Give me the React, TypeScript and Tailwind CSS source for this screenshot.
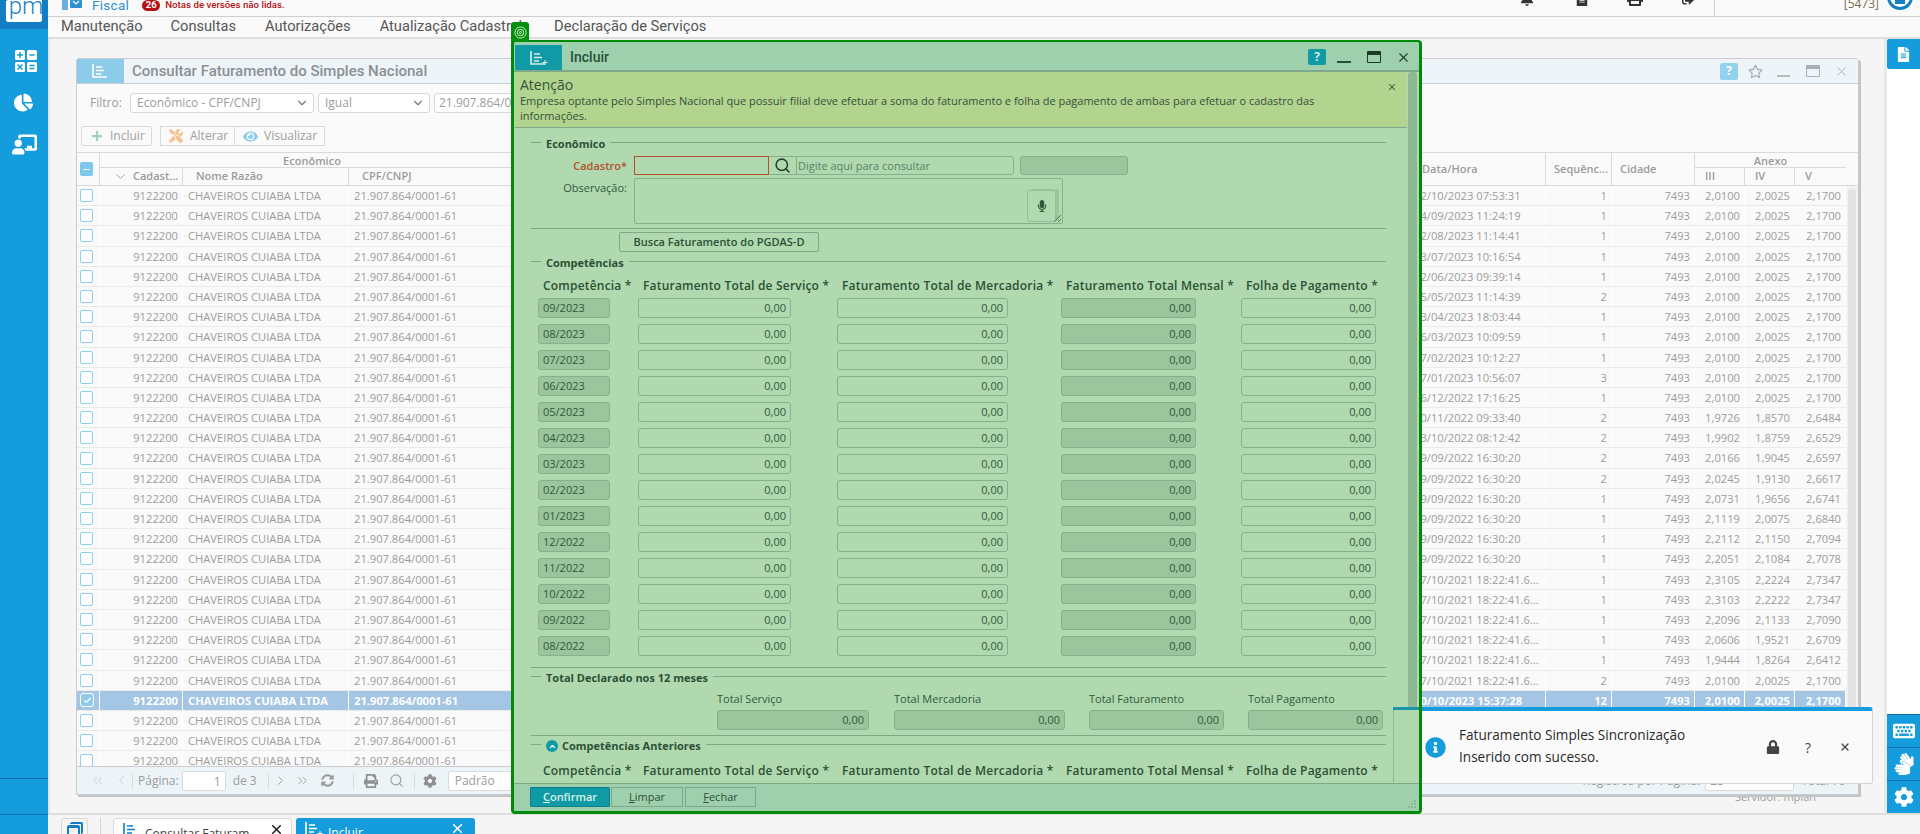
import React from "react";
import { FaBell, FaChalkboardTeacher, FaChartPie, FaCog, FaFileAlt, FaInfoCircle, FaKeyboard, FaLock, FaMicrophone, FaPrint, FaSignLanguage, FaSyncAlt, FaPlus, FaTools, FaEye, FaRegStar, FaSignOutAlt } from "react-icons/fa";
import { ChevronDown, ChevronLeft, ChevronRight, ChevronsLeft, ChevronsRight, ChevronUp, Search, X, Check, Minus } from "lucide-react";

const D21 = "7/10/2021 18:22:41.6…";
const rowsData: [string, string, string, string, string][] = [
  ["12/10/2023 07:53:31", "1", "2,0100", "2,0025", "2,1700"],
  ["14/09/2023 11:24:19", "1", "2,0100", "2,0025", "2,1700"],
  ["12/08/2023 11:14:41", "1", "2,0100", "2,0025", "2,1700"],
  ["13/07/2023 10:16:54", "1", "2,0100", "2,0025", "2,1700"],
  ["12/06/2023 09:39:14", "1", "2,0100", "2,0025", "2,1700"],
  ["15/05/2023 11:14:39", "2", "2,0100", "2,0025", "2,1700"],
  ["13/04/2023 18:03:44", "1", "2,0100", "2,0025", "2,1700"],
  ["16/03/2023 10:09:59", "1", "2,0100", "2,0025", "2,1700"],
  ["17/02/2023 10:12:27", "1", "2,0100", "2,0025", "2,1700"],
  ["17/01/2023 10:56:07", "3", "2,0100", "2,0025", "2,1700"],
  ["16/12/2022 17:16:25", "1", "2,0100", "2,0025", "2,1700"],
  ["10/11/2022 09:33:40", "2", "1,9726", "1,8570", "2,6484"],
  ["13/10/2022 08:12:42", "2", "1,9902", "1,8759", "2,6529"],
  ["19/09/2022 16:30:20", "2", "2,0166", "1,9045", "2,6597"],
  ["19/09/2022 16:30:20", "2", "2,0245", "1,9130", "2,6617"],
  ["19/09/2022 16:30:20", "1", "2,0731", "1,9656", "2,6741"],
  ["19/09/2022 16:30:20", "1", "2,1119", "2,0075", "2,6840"],
  ["19/09/2022 16:30:20", "1", "2,2112", "2,1150", "2,7094"],
  ["19/09/2022 16:30:20", "1", "2,2051", "2,1084", "2,7078"],
  ["1" + D21, "1", "2,3105", "2,2224", "2,7347"],
  ["1" + D21, "1", "2,3103", "2,2222", "2,7347"],
  ["1" + D21, "1", "2,2096", "2,1133", "2,7090"],
  ["1" + D21, "1", "2,0606", "1,9521", "2,6709"],
  ["1" + D21, "1", "1,9444", "1,8264", "2,6412"],
  ["1" + D21, "2", "2,0100", "2,0025", "2,1700"],
  ["10/10/2023 15:37:28", "12", "2,0100", "2,0025", "2,1700"],
  ["", "", "", "", ""],
  ["", "", "", "", ""],
  ["", "", "", "", ""],
];

const months = ["09/2023", "08/2023", "07/2023", "06/2023", "05/2023", "04/2023", "03/2023", "02/2023", "01/2023", "12/2022", "11/2022", "10/2022", "09/2022", "08/2022"];

const gridCols = "grid grid-cols-[23px_83px_166px_175px_881px_141px_66px_83px_50px_50px_51px]";
const compCols = "grid grid-cols-[100px_199px_224px_180px_135px]";
const inputCls = "h-[20px] rounded-[3px] border border-[#84b08c] text-[11px] leading-[18px] text-[#2f5a3a] px-[4px]";
const disabledCls = "bg-[#9bc59c]";

function ListIcon({ className = "", plus = false }: { className?: string; plus?: boolean }) {
  return (
    <svg viewBox="0 0 20 16" width="20" height="16" className={className} fill="none" stroke="currentColor" strokeWidth="1.6">
      <path d="M2 1v13h14" />
      <path d="M5 4h6M5 7.5h8M5 11h5" />
      {plus && <path d="M16 10v5M13.500 12.500h5" strokeWidth="1" />}
    </svg>
  );
}

function CalcIcon() {
  return (
    <svg viewBox="0 0 22 22" width="22" height="22">
      <rect x="0" y="0" width="10" height="10" rx="1.500" fill="#fff" />
      <rect x="12" y="0" width="10" height="10" rx="1.500" fill="#fff" />
      <rect x="0" y="12" width="10" height="10" rx="1.500" fill="#fff" />
      <rect x="12" y="12" width="10" height="10" rx="1.500" fill="#fff" />
      <path d="M5 2v6M2 5h6M14.500 5h5M2.500 14.500l5 5M7.500 14.500l-5 5M14.500 15.500h5M14.500 18.500h5" stroke="#159cdc" strokeWidth="1.500" />
    </svg>
  );
}

function Legend({ children, icon = false }: { children: React.ReactNode; icon?: boolean }) {
  return (
    <div className="flex h-[16px] items-center ml-[16px] w-[855px]">
      <div className="w-[10px] h-px bg-[#7fa88a] mb-[4px] shrink-0" />
      {icon && (
        <div className="ml-[5px] -mr-[1px] flex h-[12px] w-[12px] items-center justify-center rounded-full bg-[#0f9aa5] text-white">
          <ChevronUp size={9} strokeWidth={3} />
        </div>
      )}
      <span className="px-[5px] text-[11px] font-bold text-[#2b5034] whitespace-nowrap">{children}</span>
      <div className="flex-1 h-px bg-[#7fa88a] mb-[4px]" />
    </div>
  );
}

function CompHeader() {
  const heads = ["Competência *", "Faturamento Total de Serviço *", "Faturamento Total de Mercadoria *", "Faturamento Total Mensal *", "Folha de Pagamento *"];
  return (
    <div className={`${compCols} ml-[23px] h-[14px] text-[12px] font-semibold leading-[14px] text-[#2b5034] tracking-[0.2px]`}>
      {heads.map((h) => (
        <div key={h} className="pl-[5px] whitespace-nowrap">{h}</div>
      ))}
    </div>
  );
}

function Line({ className = "" }: { className?: string }) {
  return <div className={`ml-[16px] w-[855px] h-px bg-[#7fa88a] ${className}`} />;
}

function Modal() {
  return (
    <div className="absolute left-[511px] top-[40px] z-20 h-[774px] w-[911px]">
      <div className="absolute left-0 top-[-18px] flex h-[20px] w-[18px] items-center justify-center rounded-t-[3px] bg-[#008f0a]">
        <svg viewBox="0 0 14 14" width="13" height="13" fill="none" stroke="#d6f2d6" strokeWidth="1">
          <circle cx="7" cy="7" r="6" />
          <circle cx="7" cy="7" r="3.500" />
          <circle cx="7" cy="7" r="1.200" />
        </svg>
      </div>
      <div className="flex h-full flex-col rounded-[4px] border-b-[3px] border-l-[3px] border-r-[3px] border-t-[2px] border-[#008a0a] bg-[#9fd0ad] pt-[3px]">
        <div className="flex h-[25px] shrink-0 items-stretch pl-[1px]">
          <div className="flex w-[47px] items-center justify-center bg-[#0f9aa5] text-[#d8f0e8]">
            <ListIcon plus />
          </div>
          <div className="ml-[8px] flex-1 self-center text-[14px] font-medium font-[Roboto,sans-serif] text-[#28503a]">Incluir</div>
          <div className="flex items-center pb-[1px] text-[#23402c]">
            <div className="flex h-[16px] w-[18px] items-center justify-center rounded-[2px] bg-[#0f9aa5] text-[12px] font-bold text-[#cfeee4]">?</div>
            <div className="ml-[11px] mt-[9px] h-[2px] w-[14px] bg-[#2b4a35]" />
            <div className="ml-[16px] h-[12px] w-[14px] rounded-[1px] border border-[#1d3a28] border-t-[4px]" />
            <X size={15} strokeWidth={1.800} className="ml-[15px] mr-[8px]" />
          </div>
        </div>
        <div className="h-[2px] shrink-0 bg-[#7fa88a]" />
        <div className="relative flex min-h-0 flex-1 overflow-hidden bg-[#b0d9b0] pl-[1px]">
          <div className="w-[892px] shrink-0 overflow-hidden">
            <div className="relative h-[56px] border-b border-[#7fa88a] bg-[#b3d48f] px-[5px] text-[#34513a]">
              <div className="pt-[4px] text-[14px] leading-[17px]">Atenção</div>
              <div className="w-[810px] text-[11px] leading-[15px]">Empresa optante pelo Simples Nacional que possuir filial deve efetuar a soma do faturamento e folha de pagamento de ambas para efetuar o cadastro das informações.</div>
              <X size={10} strokeWidth={2.500} className="absolute right-[10px] top-[10px]" />
            </div>

            <div className="mt-[8px]"><Legend>Econômico</Legend></div>
            <div className="ml-[16px] mt-[4px] flex h-[19px] items-stretch">
              <div className="w-[97px] pr-[1px] text-right text-[11px] font-semibold leading-[19px] text-[#b0522a]">Cadastro*</div>
              <div className="ml-[6px] w-[135px] border border-[#b0522a]" />
              <div className="flex w-[27px] items-center justify-center border-b border-t border-[#84b08c] text-[#23402c]"><Search size={17} strokeWidth={2.200} /></div>
              <div className="w-[218px] rounded-r-[3px] border border-[#84b08c] px-[1px] text-[11px] leading-[17px] text-[#5a8264]">Digite aqui para consultar</div>
              <div className={`ml-[6px] w-[108px] rounded-[3px] border border-[#84b08c] ${disabledCls}`} />
            </div>
            <div className="ml-[16px] mt-[3px] flex h-[46px]">
              <div className="w-[97px] pr-[1px] pt-[2px] text-right text-[11px] text-[#2f5a3a]">Observação:</div>
              <div className="relative ml-[6px] w-[429px] rounded-[2px] border border-[#84b08c]">
                <div className="absolute right-[6px] top-[11px] flex h-[32px] w-[29px] items-center justify-center rounded-[3px] border border-[#94bd9c] text-[#2f5a3a] shadow-[3px_-1px_0_#9ac59e]"><FaMicrophone size={12} /></div>
                <svg viewBox="0 0 8 8" width="8" height="8" className="absolute bottom-[1px] right-[1px]" stroke="#3c5c44" strokeWidth="0.800"><path d="M1 8L8 1M5 8l3-3" /></svg>
              </div>
            </div>
            <Line className="mt-[4px]" />
            <div className="ml-[104px] mt-[3px] flex h-[20px] w-[200px] items-center justify-center rounded-[2px] border border-[#7fa88a] text-[11px] font-semibold text-[#2b5034]">Busca Faturamento do PGDAS-D</div>
            <div className="mt-[3px]"><Legend>Competências</Legend></div>
            <div className="mt-[8px]"><CompHeader /></div>
            <div className="mt-[5px] flex flex-col gap-[6px]">
              {months.map((m) => (
                <div key={m} className={`${compCols} ml-[23px]`}>
                  <div className={`${inputCls} ${disabledCls} w-[72px]`}>{m}</div>
                  <div className={`${inputCls} w-[153px] text-right`}>0,00</div>
                  <div className={`${inputCls} w-[171px] text-right`}>0,00</div>
                  <div className={`${inputCls} ${disabledCls} w-[135px] text-right`}>0,00</div>
                  <div className={`${inputCls} w-[135px] text-right`}>0,00</div>
                </div>
              ))}
            </div>
            <Line className="mt-[11px]" />
            <div className="mt-[2px]"><Legend>Total Declarado nos 12 meses</Legend></div>
            <div className="ml-[202px] mt-[6px] grid grid-cols-[177px_195px_159px_135px] text-[11px] leading-[14px] text-[#2f5a3a]">
              <div>Total Serviço</div>
              <div>Total Mercadoria</div>
              <div>Total Faturamento</div>
              <div>Total Pagamento</div>
            </div>
            <div className="ml-[202px] mt-[4px] grid grid-cols-[177px_195px_159px_135px]">
              <div className={`${inputCls} ${disabledCls} w-[152px] text-right`}>0,00</div>
              <div className={`${inputCls} ${disabledCls} w-[171px] text-right`}>0,00</div>
              <div className={`${inputCls} ${disabledCls} w-[135px] text-right`}>0,00</div>
              <div className={`${inputCls} ${disabledCls} w-[135px] text-right`}>0,00</div>
            </div>
            <Line className="mt-[5px]" />
            <div className="mt-[2px]"><Legend icon>Competências Anteriores</Legend></div>
            <div className="mt-[10px]"><CompHeader /></div>
          </div>
          <div className="ml-[1px] mr-[1px] w-[9px] rounded-t-[3px] bg-[#8fb895]" />
          <div className="absolute bottom-0 left-[879px] right-0 h-[76px] rounded-tl-[2px] border-l border-[#8fb895] bg-[#b0d9b0]">
            <div className="h-[3px] bg-[#1b96a6] -ml-px" />
          </div>
        </div>
        <div className="relative flex h-[28px] shrink-0 items-start gap-[1px] border-t border-[#7fa88a] pl-[16px] pt-[3px] text-[11px] leading-[18px] text-[#2b5034]">
          <div className="flex h-[20px] w-[80px] items-center justify-center rounded-[1px] border border-[#0d7f88] bg-[#0f9aa5] font-semibold text-[#d8f2e6]"><span><u>C</u>onfirmar</span></div>
          <div className="flex h-[20px] w-[72px] items-center justify-center border border-[#7fa88a]"><span><u>L</u>impar</span></div>
          <div className="ml-[1px] flex h-[20px] w-[71px] items-center justify-center border border-[#7fa88a]"><span><u>F</u>echar</span></div>
          <svg viewBox="0 0 10 10" width="10" height="10" className="absolute bottom-[2px] right-[2px]" fill="#8db79a"><rect x="7" y="1" width="2" height="2" /><rect x="4" y="4" width="2" height="2" /><rect x="7" y="4" width="2" height="2" /><rect x="1" y="7" width="2" height="2" /><rect x="4" y="7" width="2" height="2" /><rect x="7" y="7" width="2" height="2" /></svg>
        </div>
      </div>
    </div>
  );
}

function Notification() {
  return (
    <div className="absolute left-[1393px] top-[707px] z-10 flex h-[77px] w-[480px] items-center rounded-[3px] border border-[#d4d4d4] border-t-[4px] border-t-[#159cdc] bg-[#fafafa] text-[#2a2a2a] font-['Open_Sans',sans-serif]">
      <FaInfoCircle size={21} className="ml-[31px] text-[#159cdc]" />
      <div className="ml-[13px] w-[307px] pb-[3px] text-[13.600px] font-medium">
        <div className="leading-[22px]">Faturamento Simples Sincronização</div>
        <div className="leading-[22px]">Inserido com sucesso.</div>
      </div>
      <FaLock size={14} className="text-[#444]" />
      <span className="ml-[25px] text-[14px] text-[#444]">?</span>
      <X size={12} strokeWidth={2.500} className="ml-[28px] text-[#444]" />
    </div>
  );
}

function PanelGrid() {
  const hd = "border-r border-[#d8dadc] text-[11px] font-semibold text-[#9a9a9a] whitespace-nowrap overflow-hidden";
  return (
    <div className="mt-[6px] flex min-h-0 flex-1 flex-col overflow-hidden">
      <div className="h-[34px] border-t border-b border-[#d8dadc] shrink-0">
        <div className={`${gridCols} h-full grid-rows-[15px_17px]`}>
          <div className="row-span-2 flex items-center border-r border-[#d8dadc] pl-[3px]">
            <div className="flex h-[14px] w-[13px] items-center justify-center rounded-[2px] bg-[#7fc8ec] text-white"><Minus size={9} strokeWidth={3} /></div>
          </div>
          <div className="col-span-3 border-b border-[#d8dadc] text-center text-[11px] font-semibold leading-[15px] text-[#9a9a9a]">Econômico</div>
          <div className="row-span-2" />
          <div className={`${hd} row-span-2 flex items-center pl-[17px]`}>Data/Hora</div>
          <div className={`${hd} row-span-2 flex items-center pl-[8px]`}>Sequênc...</div>
          <div className={`${hd} row-span-2 flex items-center pl-[8px]`}>Cidade</div>
          <div className="col-span-3 border-b border-[#d8dadc] text-center text-[11px] font-semibold leading-[15px] text-[#9a9a9a]">Anexo</div>
          <div className={`${hd} flex items-center pl-[13px]`}><ChevronDown size={15} strokeWidth={1.500} className="mr-[5px]" />Cadast...</div>
          <div className={`${hd} flex items-center pl-[13px]`}>Nome Razão</div>
          <div className={`flex items-center pl-[13px] ${hd} border-r-0`}>CPF/CNPJ</div>
          <div className={`${hd} flex items-center pl-[10px]`}>III</div>
          <div className={`${hd} flex items-center pl-[10px]`}>IV</div>
          <div className={`${hd} flex items-center pl-[10px] border-r-0`}>V</div>
        </div>
      </div>
      <div className="relative min-h-0 flex-1 overflow-hidden">
        {rowsData.map((r, i) => {
          const sel = i === 25;
          const blank = r[0] === "";
          const cell = `border-r border-white truncate px-[4px] leading-[19px] ${sel ? "bg-[#a4c5e3]" : ""}`;
          return (
            <div key={i} className={`${gridCols} h-[20.200px] border-b border-[#ebebeb] text-[11.200px] ${sel ? "font-bold text-white" : "text-[#9c9c9c]"}`}>
              <div className={`flex items-center border-r border-white pl-[3px] ${sel ? "bg-[#a4c5e3]" : ""}`}>
                {sel ? (
                  <div className="flex h-[14px] w-[14px] items-center justify-center rounded-[3px] border border-white bg-[#8ccbea]"><Check size={9} strokeWidth={3} className="text-white" /></div>
                ) : (
                  <div className="h-[13px] w-[13px] rounded-[2px] border border-[#8ad0f0] bg-white" />
                )}
              </div>
              <div className={`${cell} text-right`}>9122200</div>
              <div className={`${cell} pl-[5px]`}>CHAVEIROS CUIABA LTDA</div>
              <div className={`${cell} pl-[5px]`}>21.907.864/0001-61</div>
              <div className={sel ? "bg-[#a4c5e3]" : ""} />
              <div className={`${cell} pl-[9px]`}>{r[0]}</div>
              <div className={`${cell} text-right`}>{r[1]}</div>
              <div className={`${cell} text-right`}>{blank ? "" : "7493"}</div>
              <div className={`${cell} text-right`}>{r[2]}</div>
              <div className={`${cell} text-right`}>{r[3]}</div>
              <div className={`${cell} text-right`}>{r[4]}</div>
            </div>
          );
        })}
        <div className="absolute right-0 top-0 bottom-0 w-[12px] bg-[#f2f2f2] pl-[2px] pr-[2px] pt-[3px]">
          <div className="h-[520px] rounded-[3px] bg-[#e3e3e3]" />
        </div>
      </div>
      <div className="flex h-[28px] shrink-0 items-center border-t border-[#c8ccd0] bg-[#edf4f8] text-[12px] text-[#9c9c9c]">
        <ChevronsLeft size={15} strokeWidth={1.500} className="ml-[13px] text-[#c4c8cc]" />
        <ChevronLeft size={15} strokeWidth={1.500} className="ml-[9px] text-[#c4c8cc]" />
        <div className="ml-[3px] h-[16px] w-px bg-[#d8dadc]" />
        <span className="ml-[5px]">Página:</span>
        <div className="ml-[3px] h-[20px] w-[44px] rounded-[2px] border border-[#d8dadc] bg-white pr-[4px] text-right leading-[20px]">1</div>
        <span className="ml-[7px]">de 3</span>
        <div className="ml-[11px] h-[16px] w-px bg-[#d8dadc]" />
        <ChevronRight size={15} strokeWidth={1.500} className="ml-[4px]" />
        <ChevronsRight size={15} strokeWidth={1.500} className="ml-[7px]" />
        <FaSyncAlt size={13} className="ml-[11px]" />
        <div className="ml-[19px] h-[16px] w-px bg-[#d8dadc]" />
        <FaPrint size={14} className="ml-[10px] text-[#8f8f8f]" />
        <Search size={15} strokeWidth={1.800} className="ml-[11px]" />
        <div className="ml-[10px] h-[16px] w-px bg-[#d8dadc]" />
        <FaCog size={14} className="ml-[8px] text-[#8f8f8f]" />
        <div className="ml-[11px] h-[20px] w-[184px] rounded-[2px] border border-[#d8dadc] bg-white pl-[6px] leading-[18px]">Padrão</div>
        <div className="flex-1" />
        <span>Registros por Página:</span>
        <div className="ml-[5px] h-[20px] w-[89px] rounded-[2px] border border-[#d8dadc] bg-white pl-[4px] leading-[18px]">25</div>
        <span className="ml-[7px] mr-[12px]">Total 79</span>
      </div>
    </div>
  );
}

function Panel() {
  return (
    <div className="relative z-[1] ml-[26px] mt-[19px] flex h-[737px] w-[1783px] flex-col rounded-t-[3px] border border-[#c8ccd0] bg-[#fafafa] shadow-[2px_2px_0_#c4c4c4]">
      <div className="flex h-[25px] shrink-0 items-stretch border-b border-[#c8d0d6] bg-[#eef4f8]">
        <div className="flex w-[47px] items-center justify-center bg-[#8ccbea] text-white"><ListIcon /></div>
        <div className="ml-[8px] flex-1 self-center font-[Roboto,sans-serif] text-[15px] font-medium text-[#8a9094]">Consultar Faturamento do Simples Nacional</div>
        <div className="flex items-center text-[#a8aeb2]">
          <div className="flex h-[17px] w-[18px] items-center justify-center rounded-[2px] bg-[#93d2ef] text-[12px] font-bold text-white">?</div>
          <FaRegStar size={15} className="ml-[10px]" />
          <div className="ml-[14px] mt-[9px] h-[2px] w-[13px] bg-[#b5babd]" />
          <div className="ml-[16px] h-[12px] w-[14px] rounded-[1px] border border-[#a8aeb2] border-t-[4px]" />
          <X size={15} strokeWidth={1.500} className="ml-[14px] mr-[9px]" />
        </div>
      </div>
      <div className="mt-[9px] flex h-[20px] shrink-0 items-center text-[12px] text-[#9c9c9c]">
        <span className="ml-[13px] w-[40px]">Filtro:</span>
        <div className="flex h-[20px] w-[184px] items-center justify-between rounded-[3px] border border-[#d8dadc] bg-white pl-[6px] pr-[4px]">Econômico - CPF/CNPJ<ChevronDown size={14} strokeWidth={2} className="text-[#777]" /></div>
        <div className="ml-[4px] flex h-[20px] w-[112px] items-center justify-between rounded-[3px] border border-[#d8dadc] bg-white pl-[6px] pr-[4px]">Igual<ChevronDown size={14} strokeWidth={2} className="text-[#777]" /></div>
        <div className="ml-[4px] flex h-[20px] w-[200px] items-center rounded-[3px] border border-[#d8dadc] bg-white pl-[4px]">21.907.864/0001-61</div>
      </div>
      <div className="mt-[13px] flex h-[20px] shrink-0 items-center pl-[4px] text-[12px] text-[#a0a0a0]">
        <div className="flex h-[20px] w-[71px] items-center rounded-[2px] border border-[#d8dadc] pl-[9px]"><FaPlus size={12} className="mr-[7px] text-[#9dd4b8]" />Incluir</div>
        <div className="ml-[8px] flex h-[20px] w-[75px] items-center border border-[#d8dadc] pl-[8px]"><FaTools size={14} className="mr-[7px] text-[#f6c08a]" />Alterar</div>
        <div className="flex h-[20px] w-[90px] items-center border border-l-0 border-[#d8dadc] pl-[8px]"><FaEye size={15} className="mr-[6px] text-[#8ccbea]" />Visualizar</div>
      </div>
      <PanelGrid />
    </div>
  );
}

export default function App() {
  return (
    <div className="relative flex h-[834px] w-[1920px] overflow-hidden bg-[#f5f5f5] font-['Open_Sans',sans-serif]">
      <aside className="flex h-full w-[48px] shrink-0 flex-col bg-[#159cdc]">
        <div className="h-[29px] bg-[#127fc4] px-[6px]">
          <div className="flex h-[22px] w-[36px] justify-center overflow-hidden rounded-b-[2px] bg-white font-[Roboto,sans-serif] text-[24px] font-light leading-[24px] text-[#1583c7]">
            <span className="-mt-[6px]">’pm</span>
          </div>
        </div>
        <div className="ml-[15px] mt-[21px]"><CalcIcon /></div>
        <FaChartPie size={19} className="ml-[14px] mt-[21px] text-white" />
        <FaChalkboardTeacher size={25} className="ml-[12px] mt-[20px] text-white" />
        <div className="mt-auto h-px bg-[#0f6fb0] mb-[35px]" />
        <div className="h-px bg-[#0f6fb0] mb-[19px]" />
      </aside>
      <div className="flex min-w-0 flex-1 flex-col">
        <header className="flex h-[17px] shrink-0 border-b border-[#cfcfcf] bg-[#fafafa]">
          <div className="flex h-[10px] w-full items-center">
            <svg viewBox="0 0 20 10" width="20" height="10" className="ml-[14px] text-[#2f8fd0]" fill="currentColor">
              <rect x="0" y="0" width="6" height="10" opacity="0.700" />
              <rect x="8" y="0" width="12" height="8" rx="1" />
              <path d="M11 1l3 3 3-3" stroke="#fff" strokeWidth="1.200" fill="none" />
            </svg>
            <span className="ml-[10px] font-[Roboto,sans-serif] text-[13.500px] tracking-[0.3px] text-[#2f8fd0]">Fiscal</span>
            <span className="ml-[13px] flex h-[11px] w-[18px] items-center justify-center rounded-full bg-[#b31217] font-[Roboto,sans-serif] text-[9.500px] font-bold text-white">26</span>
            <span className="ml-[5px] font-[Roboto,sans-serif] text-[9.700px] font-medium text-[#b31217]">Notas de versões não lidas.</span>
            <div className="flex-1" />
            <div className="relative -translate-y-[6px] text-[#333]"><FaBell size={14} /><span className="absolute -right-[6px] -top-[2px] h-[8px] w-[10px] rounded-full bg-[#ee3a36]" /></div>
            <FaFileAlt size={14} className="ml-[41px] -translate-y-[6px] text-[#333]" />
            <div className="relative ml-[38px] -translate-y-[7px] text-[#333]"><FaPrint size={16} /><span className="absolute -right-[7px] -top-[1px] h-[8px] w-[10px] rounded-full bg-[#ee3a36]" /></div>
            <FaSignOutAlt size={12} className="ml-[39px] -translate-y-[5px] text-[#333]" />
            <div className="ml-[20px] h-[16px] w-px self-start bg-[#cfcfcf]" />
            <span className="ml-[129px] -translate-y-[1px] text-[12px] text-[#7d6a52]">[5473]</span>
            <div className="ml-[8px] mr-[7px] h-[26px] w-[26px] -translate-y-[8px] overflow-hidden rounded-full border-[3px] border-[#127fc4] bg-white">
              <div className="ml-[5px] mt-[9px] h-[8px] w-[10px] rounded-t-full bg-[#127fc4]" />
            </div>
          </div>
        </header>
        <nav className="flex h-[22px] shrink-0 items-center border-b-2 border-[#dedede] bg-[#fafafa] pl-[13px] font-[Roboto,sans-serif] text-[14.650px] text-[#555]">
          <span>Manutenção</span>
          <span className="ml-[28px]">Consultas</span>
          <span className="ml-[29px]">Autorizações</span>
          <span className="ml-[29px]">Atualização Cadastral</span>
          <span className="ml-[32px]">Declaração de Serviços</span>
        </nav>
        <div className="flex min-h-0 flex-1">
          <main className="min-w-0 flex-1 border-l-2 border-[#e3e3e3]">
            <Panel />
            <div className="mr-[68px] -mt-[6px] text-right text-[11px] text-[#9c9c9c]">Servidor: mplan</div>
          </main>
          <aside className="flex w-[36px] shrink-0 flex-col border-l-[3px] border-[#e8e8e8] bg-white">
            <div className="flex h-[30px] items-center justify-center rounded-l-[2px] bg-[#159cdc] text-white"><FaFileAlt size={15} /></div>
            <div className="mt-auto flex h-[33px] items-center justify-center border-t border-[#0f6fb0] bg-[#159cdc] text-white"><FaKeyboard size={22} /></div>
            <div className="flex h-[33px] items-center justify-center border-t border-[#0f6fb0] bg-[#159cdc] text-white"><FaSignLanguage size={22} /></div>
            <div className="flex h-[33px] items-center justify-center border-t border-[#0f6fb0] bg-[#159cdc] text-white"><FaCog size={20} /></div>
          </aside>
        </div>
        <footer className="flex h-[21px] shrink-0 items-start border-t-2 border-[#dedede] bg-[#f5f5f5] pt-[3px] text-[12px]">
          <div className="relative ml-[13px] h-[30px] w-[27px] rounded-[3px] border border-[#d8d8d8] text-[#127fc4]">
            <div className="absolute left-[8px] top-[3px] h-[12px] w-[13px] rounded-[2px] border-t-[2px] border-r-[2px] border-[#127fc4]" />
            <div className="absolute left-[5px] top-[6px] h-[12px] w-[13px] rounded-[2px] border-[2px] border-t-[3px] border-[#127fc4]" />
          </div>
          <div className="ml-[12px] h-[20px] w-px bg-[#d8d8d8]" />
          <div className="ml-[12px] flex h-[30px] w-[179px] rounded-t-[3px] border border-[#d8d8d8] bg-white pl-[8px] pt-[3px] text-[#444]">
            <ListIcon className="text-[#127fc4]" />
            <span className="ml-[3px] mt-[3px]">Consultar Faturam</span>
            <X size={15} strokeWidth={2.500} className="ml-[20px] text-[#222]" />
          </div>
          <div className="ml-[4px] flex h-[30px] w-[179px] rounded-t-[3px] bg-[#159cdc] pl-[8px] pt-[3px] text-white">
            <ListIcon plus />
            <span className="ml-[4px] mt-[3px]">Incluir</span>
            <X size={15} strokeWidth={2.500} className="ml-[87px]" />
          </div>
        </footer>
      </div>
      <Notification />
      <Modal />
    </div>
  );
}
